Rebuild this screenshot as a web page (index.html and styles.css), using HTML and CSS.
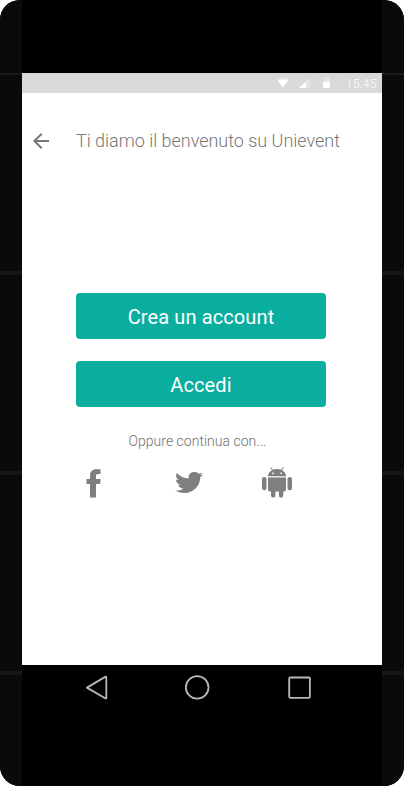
FILE: index.html
```html
<!DOCTYPE html>
<html lang="it">
<head>
<meta charset="utf-8">
<title>Unievent</title>
<link rel="stylesheet" href="styles.css">
</head>
<body>
<div class="device">
  <div class="rail"><i></i><i></i><i></i><i></i></div>
  <div class="front">
    <main class="screen">
      <div class="status">
        <svg width="54" height="12" viewBox="0 0 54 12" fill="#fff">
          <path opacity=".35" d="M0 2Q6-1 12 2L6 10.500Z"/><path d="M.8 3.400Q6 1.500 11.200 3.400L6 10.500Z"/>
          <path opacity=".3" d="M22 11H33.500V0Z"/><path d="M22 11H29V4.500Z"/>
          <path opacity=".35" d="M46 1h1.500V0h4v1H53v4h-7z"/><path d="M46 5h7v5q0 1-1 1h-5q-1 0-1-1z"/>
        </svg>
        <span class="time">15:45</span>
      </div>
      <header class="bar">
        <svg class="back" width="16" height="16" viewBox="4 4 16 16" fill="#757575"><path d="M20 11H7.830l5.590-5.590L12 4l-8 8 8 8 1.410-1.410L7.830 13H20z"/></svg>
        <h1>Ti diamo il benvenuto su Unievent</h1>
      </header>
      <button>Crea un account</button>
      <button>Accedi</button>
      <p>Oppure continua con...</p>
      <div class="social">
        <svg width="15" height="29" viewBox="0 0 15 29"><path d="M4 28.500V15H.5v-5H4V7.200C4 2.500 6 .3 10.500.3h4v4.800h-2.300C10.300 5.100 10 5.900 10 7.300V10h4.700l-.6 5H10v13.500Z"/></svg>
        <svg width="28" height="21" viewBox="0 2.250 24 19.500" preserveAspectRatio="none"><path d="M23.953 4.570a10 10 0 01-2.825.775 4.958 4.958 0 002.163-2.723c-.951.555-2.005.959-3.127 1.184a4.920 4.920 0 00-8.384 4.482C7.690 8.095 4.067 6.130 1.640 3.162a4.822 4.822 0 00-.666 2.475c0 1.710.870 3.213 2.188 4.096a4.904 4.904 0 01-2.228-.616v.06a4.923 4.923 0 003.946 4.827 4.996 4.996 0 01-2.212.085 4.936 4.936 0 004.604 3.417 9.867 9.867 0 01-6.102 2.105c-.39 0-.779-.023-1.170-.067a13.995 13.995 0 007.557 2.209c9.053 0 13.998-7.496 13.998-13.985 0-.21 0-.42-.015-.63A9.935 9.935 0 0024 4.590z"/></svg>
        <svg width="30" height="32" viewBox="0 0 30 32">
          <path d="M6 9.200Q6 5.200 10 3.200L8.200.5l.7-.5 2 2.800Q15 1.200 19.100 2.800l2-2.800.7.500L20 3.200q4 2 4 6Z"/>
          <path d="M6 10.400h18v12q0 2-2 2h-.7v4a2.200 2.200 0 01-4.400 0v-4h-3.500v4a2.200 2.200 0 01-4.400 0v-4H8q-2 0-2-2Z"/>
          <rect y="10" width="4.500" height="13.200" rx="2.200"/><rect x="25.500" y="10" width="4.500" height="13.200" rx="2.200"/>
          <circle cx="10.900" cy="6.300" r=".9" fill="#fff"/><circle cx="19.100" cy="6.300" r=".9" fill="#fff"/>
        </svg>
      </div>
    </main>
    <nav>
      <svg width="226" height="26" viewBox="0 0 226 26" fill="none" stroke="#b8b8b8" stroke-width="1.800" stroke-linejoin="round"><path d="M1.900 12.600 20.200 1.900Q21.300 1.300 21.300 2.500V22.700Q21.300 23.900 20.200 23.300Z"/><circle cx="112.200" cy="12.400" r="11.300"/><rect x="204.200" y="2.500" width="20.700" height="20.300" rx="1"/></svg>
    </nav>
  </div>
  <div class="rail"><i></i><i></i><i></i><i></i></div>
</div>
</body>
</html>
```

FILE: styles.css
```css
* { box-sizing: border-box; }
body { margin: 0; background: #fff; font-family: Roboto, sans-serif; }
.device { width: 404px; height: 786px; display: grid; grid-template-columns: 22px 360px 22px; background: #000; border-radius: 20px; overflow: hidden; }
.rail { background: #0a0a0a; padding-top: 73px; }
.rail i { display: block; height: 4px; margin-bottom: 196px; background: #161616; }
.rail i:first-child { height: 2px; }
.rail i:first-child { background: #191919; }
.front { padding-top: 73px; }
.screen { height: 592px; background: #fff; display: flex; flex-direction: column; align-items: center; }
.status { width: 100%; height: 20px; flex: none; background: #d9d9d9; display: flex; align-items: center; justify-content: flex-end; padding-right: 5px; }
.time { color: #fff; font-size: 12px; font-weight: 300; line-height: 20px; letter-spacing: .35px; margin-left: 15px; padding-top: 2px; }
.bar { width: 100%; height: 96px; padding-left: 11px; display: flex; align-items: center; }
h1 { margin: 0 0 0 27px; font-size: 18px; line-height: 24px; font-weight: 300; letter-spacing: -.02px; color: #787878; white-space: nowrap; }
button { width: 250px; height: 46px; flex: none; margin: 0 2px 22px 0; padding: 2px 0 0; border: 0; border-radius: 4px; background: #0aae9f; color: #fff; font: 400 20px/24px Roboto, sans-serif; letter-spacing: .12px; }
.bar + button { margin-top: 104px; }
p { margin: 3px 9px 0 0; font-size: 14px; line-height: 18px; font-weight: 300; letter-spacing: .02px; color: #707070; }
.social { width: 206px; height: 32px; margin: 17px 26px 0 0; display: flex; align-items: center; justify-content: space-between; fill: #7f7f7f; }
.social svg:nth-child(2) { margin: 0 0 1px 14px; }
nav { padding: 10px 0 0 63px; }
nav svg { display: block; }
```
